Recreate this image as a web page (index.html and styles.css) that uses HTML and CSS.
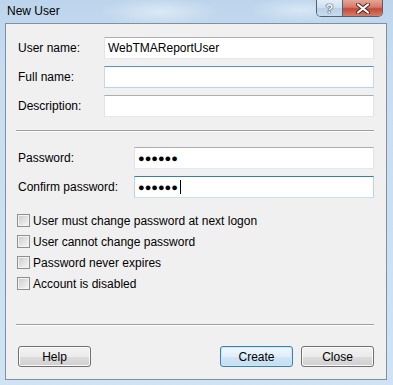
FILE: index.html
```html
<!DOCTYPE html>
<html lang="en">
<head>
  <meta charset="UTF-8">
  <meta name="viewport" content="width=device-width, initial-scale=1.0">
  <title>New User</title>
  <link rel="stylesheet" href="styles.css">
</head>
<body>
  <div class="window">
    <div class="titlebar">
      <span class="title">New User</span>
      <div class="caption-buttons">
        <span class="cap-btn cap-help">?</span>
        <span class="cap-btn cap-close">
          <svg width="14" height="11" viewBox="0 0 14 11">
            <path d="M2 1.5 L12 9.5 M12 1.5 L2 9.5" stroke="#4a2a2a" stroke-width="4" stroke-linecap="round"/>
            <path d="M2 1.5 L12 9.5 M12 1.5 L2 9.5" stroke="#ffffff" stroke-width="2.2" stroke-linecap="round"/>
          </svg>
        </span>
      </div>
    </div>

    <div class="client">
      <div class="fields">
        <div class="form-row">
          <label for="username">User name:</label>
          <input class="field" id="username" type="text" value="WebTMAReportUser">
        </div>
        <div class="form-row">
          <label for="fullname">Full name:</label>
          <input class="field field-hover" id="fullname" type="text">
        </div>
        <div class="form-row">
          <label for="description">Description:</label>
          <input class="field" id="description" type="text">
        </div>
      </div>

      <div class="separator sep-top"></div>

      <div class="fields fields-password">
        <div class="form-row">
          <label>Password:</label>
          <div class="field"><span class="dots">●●●●●●</span></div>
        </div>
        <div class="form-row">
          <label>Confirm password:</label>
          <div class="field field-focus"><span class="dots">●●●●●●</span><span class="caret"></span></div>
        </div>
      </div>

      <div class="checks">
        <label class="check"><span class="box"></span>User must change password at next logon</label>
        <label class="check"><span class="box"></span>User cannot change password</label>
        <label class="check"><span class="box"></span>Password never expires</label>
        <label class="check"><span class="box"></span>Account is disabled</label>
      </div>

      <div class="separator sep-bottom"></div>

      <div class="buttons">
        <button class="btn btn-help">Help</button>
        <button class="btn btn-default">Create</button>
        <button class="btn">Close</button>
      </div>
    </div>
  </div>
</body>
</html>
```

FILE: styles.css
```css
body {
  margin: 0;
  padding: 0;
  font-family: 'Liberation Sans', Arial, sans-serif;
  font-size: 12px;
  color: #000000;
}

.window {
  width: 393px;
  height: 385px;
  box-sizing: border-box;
  padding: 0 6px 5px 5px;
  background:
    radial-gradient(ellipse 60px 14px at 160px 12px, rgba(255, 255, 255, 0.45), rgba(255, 255, 255, 0)),
    radial-gradient(ellipse 50px 12px at 300px 10px, rgba(255, 255, 255, 0.4), rgba(255, 255, 255, 0)),
    linear-gradient(180deg, #bdd5ec 0%, #c9ddf0 20%, #d0e3f4 100%);
}

.titlebar {
  height: 23px;
  display: flex;
  justify-content: space-between;
  align-items: flex-start;
}

.title {
  padding: 4px 0 0 2px;
  line-height: 14px;
  font-size: 12px;
  color: #000000;
}

.caption-buttons {
  display: flex;
  margin-right: 4px;
  height: 16px;
  border: 1px solid #4f6275;
  border-top: none;
  border-radius: 0 0 5px 5px;
  overflow: hidden;
}

.cap-btn {
  display: flex;
  align-items: center;
  justify-content: center;
  height: 16px;
}

.cap-help {
  width: 25px;
  border-right: 1px solid #4f6275;
  background: linear-gradient(180deg, #e4eef8 0%, #cddff0 50%, #b9d0e6 51%, #c8dcef 100%);
  color: #ffffff;
  font-weight: bold;
  font-size: 13px;
  text-shadow: 0 0 1px #2d3e52, 0 0 1px #2d3e52, 0 0 1px #2d3e52;
}

.cap-close {
  width: 39px;
  background: linear-gradient(180deg, #e7a695 0%, #d37a68 45%, #c4483a 55%, #d67d62 100%);
}

.client {
  height: 357px;
  box-sizing: border-box;
  border: 1px solid #7d90a4;
  background-color: #f0f0f0;
  padding: 13px 12px 12px 11px;
}

.fields {
  display: flex;
  flex-direction: column;
  gap: 7px;
}

.form-row {
  display: flex;
  align-items: center;
  height: 22px;
}

.form-row label {
  width: 87px;
  flex-shrink: 0;
  padding-left: 1px;
  box-sizing: border-box;
}

.fields-password .form-row label {
  width: 117px;
}

.field {
  flex: 1;
  height: 22px;
  box-sizing: border-box;
  margin: 0;
  padding: 0 3px;
  font-family: 'Liberation Sans', Arial, sans-serif;
  font-size: 12px;
  color: #000000;
  background-color: #ffffff;
  border: 1px solid #e2e3ea;
  border-top-color: #abadb3;
  border-bottom-color: #e3e9ef;
  outline: none;
  display: flex;
  align-items: center;
}

.field-hover {
  border-color: #c5daed;
  border-top-color: #5794bf;
  border-bottom-color: #b7d5ea;
}

.field-focus {
  border-color: #b7d5ea;
  border-top-color: #3d7bad;
  border-bottom-color: #c7e2f1;
}

.dots {
  font-size: 11px;
  letter-spacing: 0;
}

.caret {
  display: inline-block;
  width: 1px;
  height: 14px;
  background-color: #000000;
  margin-left: 2px;
}

.separator {
  margin-left: -1px;
  border-top: 1px solid #a0a0a0;
  border-bottom: 1px solid #ffffff;
}

.sep-top {
  margin-top: 13px;
  margin-bottom: 15px;
}

.sep-bottom {
  margin-top: 30px;
  margin-bottom: 20px;
}

.checks {
  margin-top: 12px;
  display: flex;
  flex-direction: column;
}

.check {
  display: flex;
  align-items: center;
  height: 21px;
  gap: 3px;
}

.box {
  width: 13px;
  height: 13px;
  box-sizing: border-box;
  border: 1px solid #8e8f8f;
  background: linear-gradient(135deg, #c9c9c9 0%, #e6e6e6 60%, #f6f6f6 100%);
  box-shadow: inset 0 0 0 1px #f3f3f3;
}

.buttons {
  display: flex;
  gap: 8px;
  padding-left: 1px;
}

.btn {
  width: 73px;
  height: 21px;
  padding: 0;
  font-family: 'Liberation Sans', Arial, sans-serif;
  font-size: 12px;
  color: #000000;
  border: 1px solid #707070;
  border-radius: 3px;
  background: linear-gradient(180deg, #f2f2f2 0%, #ebebeb 50%, #dddddd 51%, #cfcfcf 100%);
  box-shadow: inset 0 0 0 1px #fbfbfb;
}

.btn-help {
  margin-right: auto;
}

.btn-default {
  border-color: #3c7fb1;
  background: linear-gradient(180deg, #eef6fc 0%, #e1eff9 50%, #d0e6f5 51%, #c3def1 100%);
  box-shadow: inset 0 0 0 1px #cbe7f8;
}
```
